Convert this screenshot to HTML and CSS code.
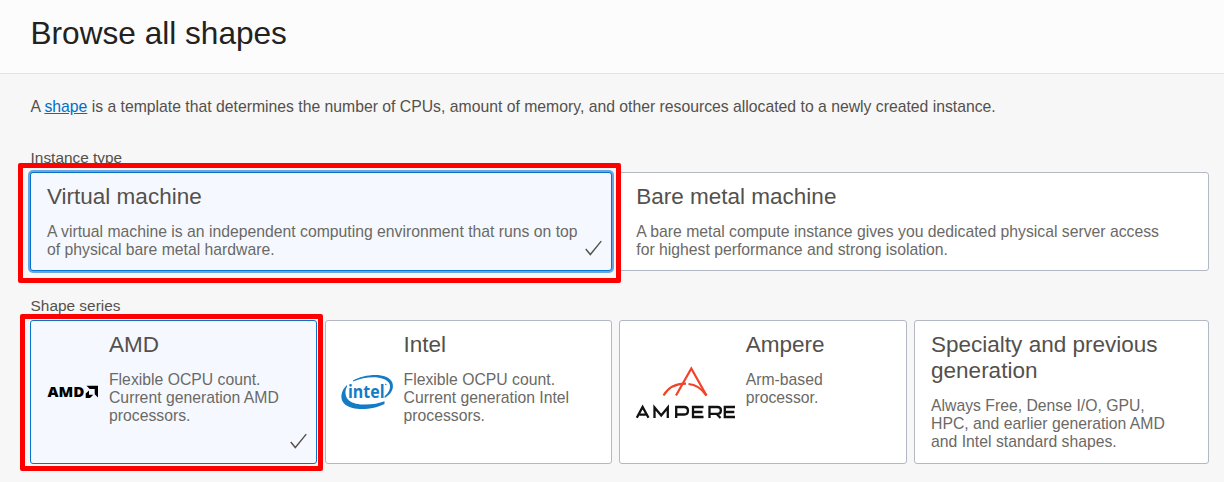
FILE: index.html
```html
<!DOCTYPE html>
<html lang="en">
<head>
<meta charset="utf-8">
<title>Browse all shapes</title>
<link rel="stylesheet" href="styles.css">
</head>
<body>
<header class="header"><h1 class="heading">Browse all shapes</h1></header>
<main class="content">
  <p class="intro">A <a class="link" href="#">shape</a> is a template that determines the number of CPUs, amount of memory, and other resources allocated to a newly created instance.</p>
  <h2 class="label">Instance type</h2>
  <div class="cards types">
    <section class="card selected focused">
      <div class="body">
        <h3 class="title">Virtual machine</h3>
        <p class="desc">A virtual machine is an independent computing environment that runs on top<br>of physical bare metal hardware.</p>
      </div>
      <svg class="check" viewBox="0 0 16 16"><path d="M.7 8.5 5 13.7 15.3 1"/></svg>
      <div class="highlight highlight-type"></div>
    </section>
    <section class="card last">
      <div class="body">
        <h3 class="title">Bare metal machine</h3>
        <p class="desc">A bare metal compute instance gives you dedicated physical server access<br>for highest performance and strong isolation.</p>
      </div>
    </section>
  </div>
  <h2 class="label">Shape series</h2>
  <div class="cards series">
    <section class="card selected">
      <svg class="logo logo-small" viewBox="0 0 52 144">
        <text class="amd-text" x=".5" y="77" textLength="37" lengthAdjust="spacingAndGlyphs">AMD</text>
        <path d="M39.500 65.700H51V77.500l-3.300-3.200V69h-5zM42 70.500v4.300h4.300L43 78h-4.300V73.500z"/>
      </svg>
      <div class="body">
        <h3 class="title">AMD</h3>
        <p class="desc">Flexible OCPU count.<br>Current generation AMD<br>processors.</p>
      </div>
      <svg class="check" viewBox="0 0 16 16"><path d="M.7 8.5 5 13.7 15.3 1"/></svg>
      <div class="highlight highlight-series"></div>
    </section>
    <section class="card">
      <svg class="logo logo-small" viewBox="0 0 52 144">
        <path class="intel-ring" d="M11 60.500C23 53.500 46 52 50.300 62.500c2.300 7-2 12-7.600 15.400v-1.900c4-3.200 6.300-7.500 4.900-12C43.500 55.500 25 55.500 11 61.600zM5 65C-1 70.500-3 79 3 84.500c9 7.200 29 5 39.500-.5v-2.700C33 85.200 14 86.500 7 80.500 3 77 2.500 71 5 66.500z"/>
        <text class="intel-text" x="6" y="77.500" textLength="36.500" lengthAdjust="spacingAndGlyphs">intel</text>
        <circle class="intel-ring" cx="43.800" cy="64.500" r=".7"/>
      </svg>
      <div class="body">
        <h3 class="title">Intel</h3>
        <p class="desc">Flexible OCPU count.<br>Current generation Intel<br>processors.</p>
      </div>
    </section>
    <section class="card">
      <svg class="logo logo-wide" viewBox="0 0 100 144">
        <g class="ampere-mark"><path d="M40 75.500 55.300 48.500 70.500 75.500"/><path d="M27.500 75.500C32 68 39 63.500 50 63.700"/><path d="M52.500 64C60 64.500 66 69 70.500 75.500"/></g>
        <g class="ampere-word"><path d="M.8 97.800 6.600 87 12.500 97.800M3.500 94.700h6.300M18.500 98V87.500l6.700 8 6.600-8V98M40.200 98V87h8c5 0 5 7.500 0 7.500h-8M67.500 87H57v10h10.500M57 92h9.500M73.500 98V87h8c4.500 0 4.500 6.800 0 6.800h-8m7 0 4 4.200M99 87H88.800v10H99M88.800 92h9.500"/></g>
      </svg>
      <div class="body">
        <h3 class="title">Ampere</h3>
        <p class="desc">Arm-based<br>processor.</p>
      </div>
    </section>
    <section class="card last">
      <div class="body">
        <h3 class="title">Specialty and previous<br>generation</h3>
        <p class="desc">Always Free, Dense I/O, GPU,<br>HPC, and earlier generation AMD<br>and Intel standard shapes.</p>
      </div>
    </section>
  </div>
</main>
</body>
</html>
```
FILE: styles.css
```css
* { box-sizing: border-box; }
body { margin: 0; background: #f7f7f7; font-family: "Liberation Sans", Arial, sans-serif; color: #54504c; height: 482px; overflow: hidden; }
h1, h2, h3, p { margin: 0; font-weight: 400; }
.header { height: 74px; background: #fcfcfc; border-bottom: 1px solid #e2e2e2; padding: 14px 30.5px; }
.heading { font-size: 31.6px; line-height: 38px; color: #222; }
.content { padding: 23px 15px 0 30px; }
.intro { font-size: 15.75px; line-height: 20px; height: 32px; padding-left: .4px; white-space: nowrap; }
.link { color: #006fc8; text-decoration: underline; }
.label { font-size: 15.4px; line-height: 18px; height: 23px; margin-top: 20px; padding-left: .6px; }
.types { height: 99px; margin-bottom: 26px; }
.cards { display: grid; grid-template-rows: 100%; }
.types { grid-template-columns: 589.3px 1fr; }
.series { grid-template-columns: 294.6px 294.7px 294.8px 1fr; height: 144px; }
.card { position: relative; display: flex; background: #fff; border: 1px solid #b3b8c2; border-radius: 3px; margin-right: 7.3px; padding: 11px 16px; white-space: nowrap; }
.card.last { margin-right: 0; }
.card.selected { background: #f5f9ff; border-color: #0572ce; }
.card.focused { box-shadow: 0 0 0 2px #6aa4e3; }
.title { font-size: 22.5px; line-height: 26px; padding-top: .4px; }
.desc { font-size: 15.76px; line-height: 18px; margin-top: 12.6px; color: #6b6966; }
.logo { flex: none; height: 144px; margin-top: -12px; overflow: visible; }
.logo-small { width: 52px; margin-right: 10px; }
.logo-wide { width: 100px; margin-right: 9.4px; }
.check { position: absolute; right: 9.4px; bottom: 13.5px; width: 17px; height: 17px; fill: none; stroke: #54504c; stroke-width: 1.3; }
.highlight { position: absolute; border: 5px solid #f00; border-radius: 2px; z-index: 2; pointer-events: none; }
.highlight-type { inset: -10px -10px -13px -13px; }
.highlight-series { inset: -7px -7px -8px -11px; }
.amd-text { font: 800 14.8px "Open Sans", sans-serif; }
.intel-ring { fill: #147bc5; }
.intel-text { font: 700 18px "Open Sans", sans-serif; fill: #147bc5; }
.ampere-mark { fill: none; stroke: #f0432a; stroke-width: 2.2; }
.ampere-word { fill: none; stroke: #111; stroke-width: 2.3; }
```
